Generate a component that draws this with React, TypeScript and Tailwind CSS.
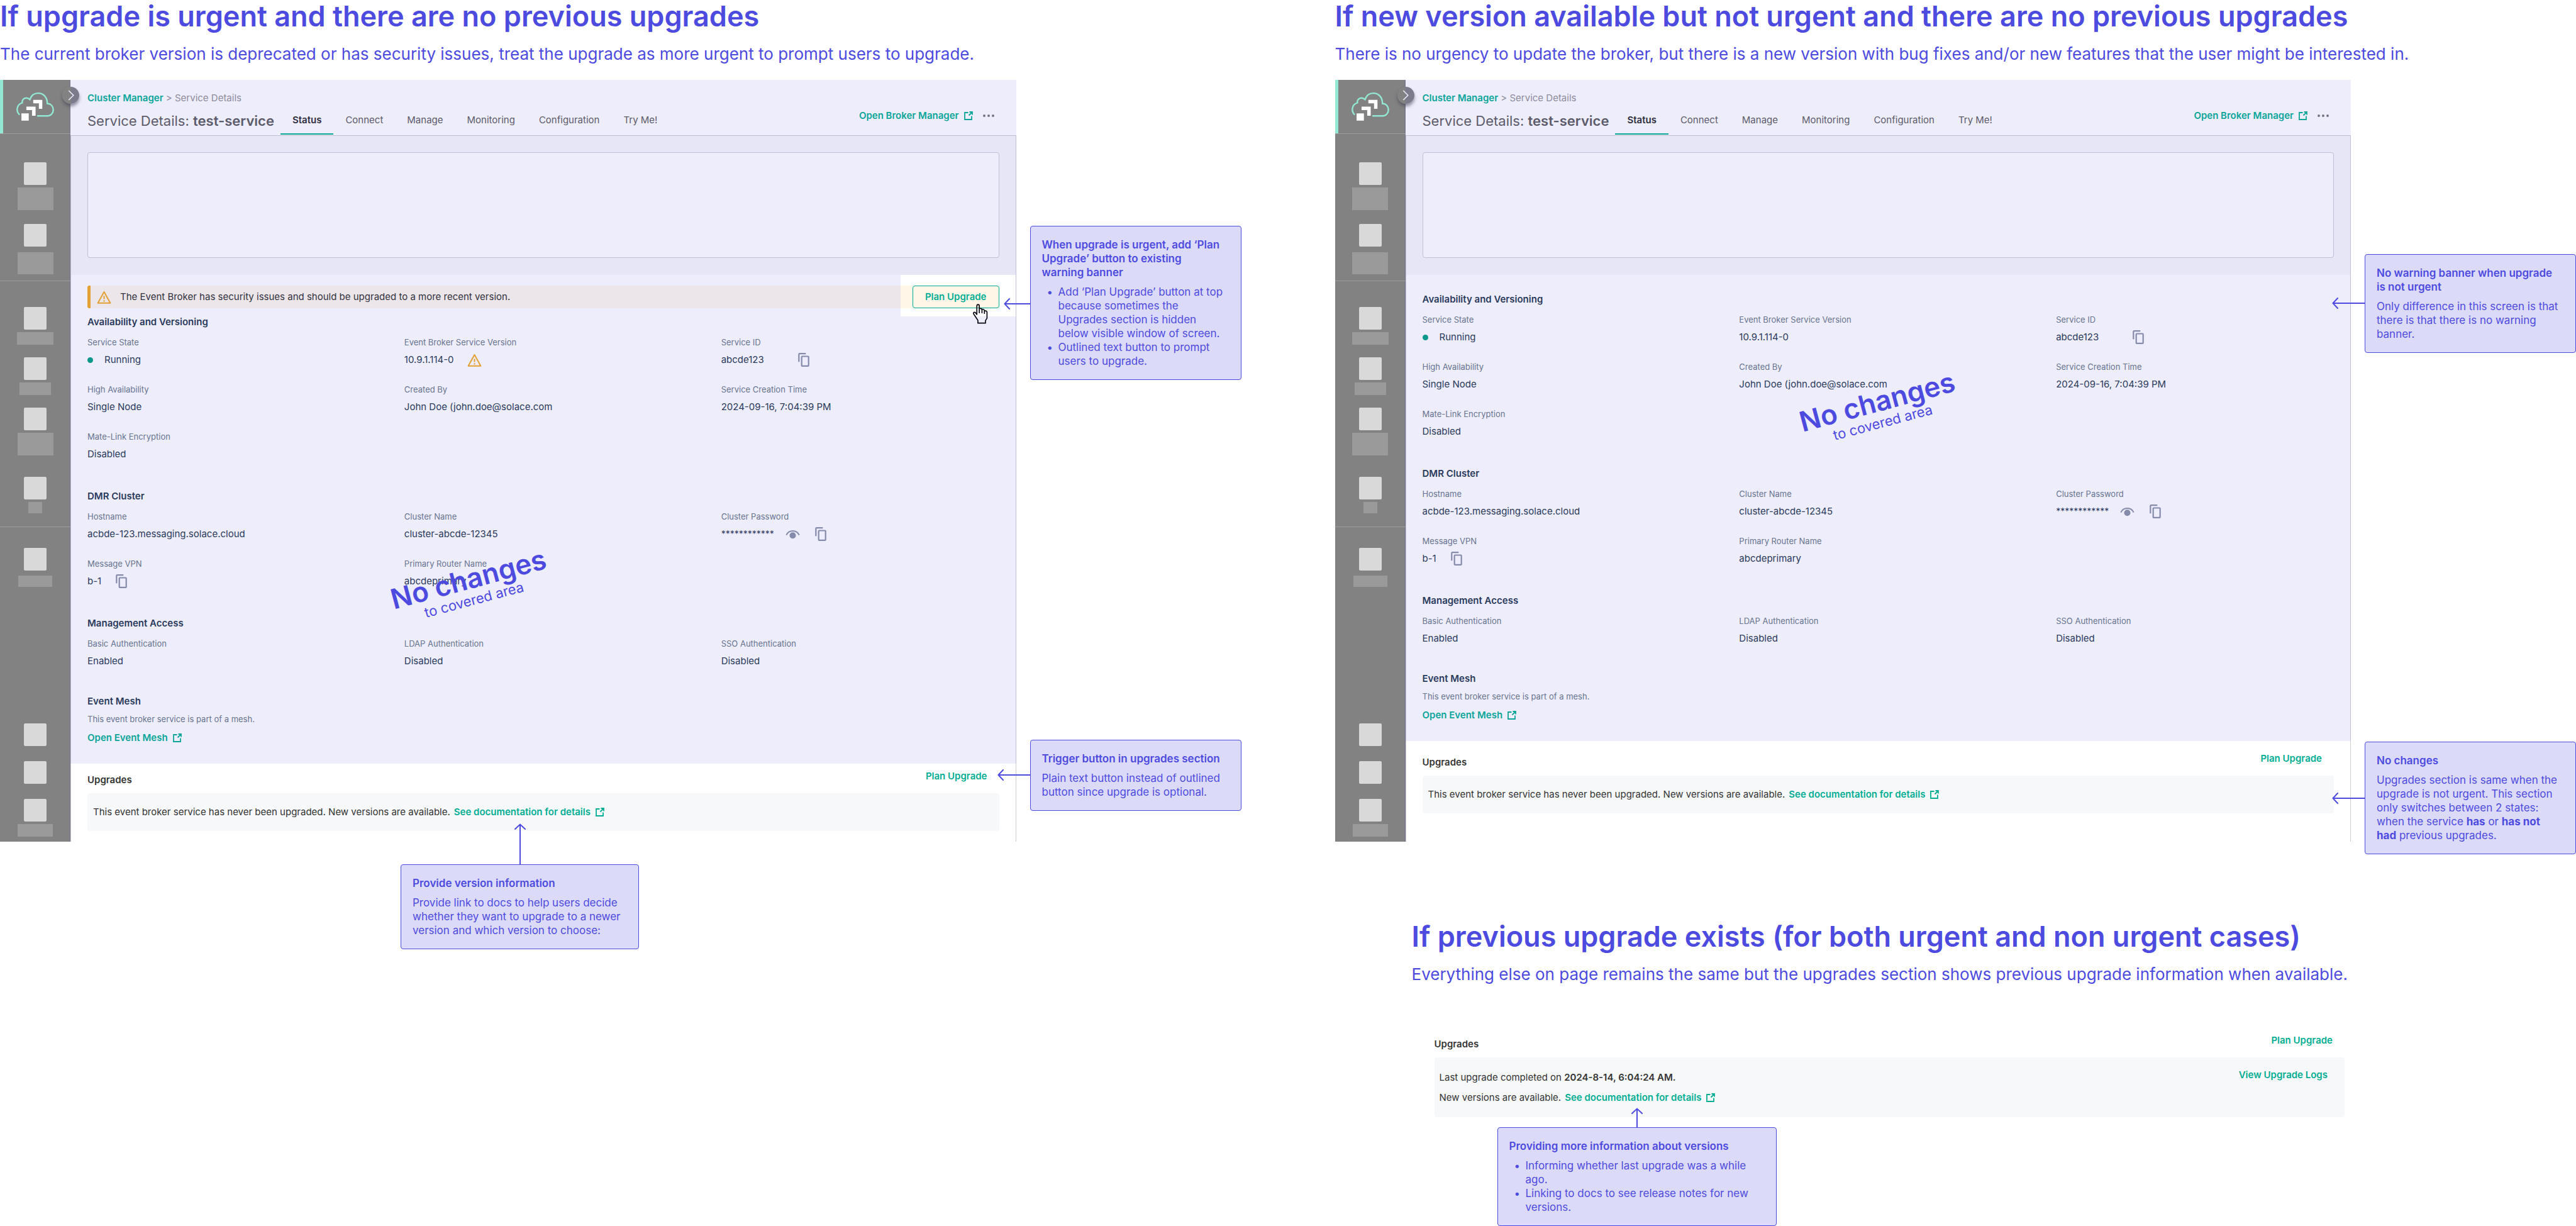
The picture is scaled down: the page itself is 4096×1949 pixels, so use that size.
import type { ReactNode } from "react";

function Logo() {
  return (
    <svg viewBox="140 120 320 260" className="h-[49px] w-[60px]" aria-hidden="true">
      <path
        d="M168 319C152 306 146 288 147 270C149 244 167 224 190 217C187 196 202 177 222 177C234 176 245 181 254 190C266 156 293 136 325 136C372 136 402 173 403 225C432 223 453 248 453 277C453 306 431 329 403 329H316"
        fill="none"
        stroke="#92e8d3"
        strokeWidth="13"
      />
      <path
        d="M183 307h62v62h-62zM225 250h78v77h-30v-48h-48zM283 192h77v77h-29v-47h-48z"
        fill="#ffffff"
      />
    </svg>
  );
}

function ExternalIcon() {
  return (
    <svg viewBox="0 0 14 14" className="h-[14px] w-[14px] shrink-0" fill="none" stroke="currentColor" strokeWidth="1.8" aria-hidden="true">
      <path d="M6.5 2H1v11h11V7.5M8.5 1H13v4.5M13 1L7.5 6.5" />
    </svg>
  );
}

function WarningIcon() {
  return (
    <svg viewBox="0 0 23 21" className="h-[21px] w-[23px] shrink-0" fill="none" stroke="#e3a035" strokeWidth="2" aria-hidden="true">
      <path d="M11.5 2L21.4 19.8H1.6z" strokeLinejoin="round" />
      <path d="M11.5 8.5v5M11.5 15.2v2.2" />
    </svg>
  );
}

function CopyButton() {
  return (
    <button type="button" aria-label="Copy" className="shrink-0">
      <svg viewBox="882 288 96 120" className="h-[22px] w-[18px]" fill="none" stroke="#858baa" strokeWidth="12" aria-hidden="true">
        <rect x="912" y="318" width="60" height="84" rx="5" />
        <path d="M948 294H894Q888 294 888 300V366" />
      </svg>
    </button>
  );
}

function EyeButton() {
  return (
    <button type="button" aria-label="Show password" className="shrink-0">
      <svg viewBox="628 308 124 80" className="h-[15px] w-[23px]" aria-hidden="true">
        <path d="M635 354C656 306 724 306 745 354" fill="none" stroke="#858baa" strokeWidth="11" />
        <circle cx="690" cy="357" r="27" fill="#858baa" />
      </svg>
    </button>
  );
}

function HandCursor() {
  return (
    <svg viewBox="655 300 140 180" className="absolute top-[45px] right-[43px] z-10 h-[34px] w-[26px]" aria-hidden="true">
      <path
        d="M703 469V445L667 391C660 378 676 370 684 382L694 395V323C694 306 715 306 715 323V380V350C719 338 738 342 738 356V380V354C744 346 759 350 759 364V386V368C766 359 781 364 781 376V427L768 447V469Z"
        fill="none"
        stroke="#05050f"
        strokeWidth="9"
        strokeLinejoin="round"
      />
    </svg>
  );
}

function ArrowLeft({ className }: { className: string }) {
  return (
    <div className={"absolute right-full flex items-center " + className}>
      <svg viewBox="0 0 10 18" className="h-[18px] w-[10px] shrink-0" fill="none" stroke="#4d4ae0" strokeWidth="2" strokeLinecap="round" aria-hidden="true">
        <path d="M9 1L1.500 9L9 17M1.500 9H10" />
      </svg>
      <div className="h-[2px] flex-1 bg-[#4d4ae0]" />
    </div>
  );
}

function ArrowUp({ className }: { className: string }) {
  return (
    <div className={"absolute bottom-full left-1/2 flex -translate-x-1/2 flex-col items-center " + className}>
      <svg viewBox="0 0 18 10" className="h-[10px] w-[18px] shrink-0" fill="none" stroke="#4d4ae0" strokeWidth="2" strokeLinecap="round" aria-hidden="true">
        <path d="M1 9L9 1.500L17 9M9 1.500V10" />
      </svg>
      <div className="w-[2px] flex-1 bg-[#4d4ae0]" />
    </div>
  );
}

function Note({ title, className = "", arrow, children }: { title: string; className?: string; arrow: ReactNode; children: ReactNode }) {
  return (
    <aside className={"relative rounded-[4px] border border-[#4d4ae0] bg-[#dbdaf8] p-[18px] text-[17px] leading-[22px] text-[#4d4ae0] " + className}>
      {arrow}
      <h3 className="mb-[9px] pr-1 font-semibold">{title}</h3>
      {children}
    </aside>
  );
}

function NoteList({ items }: { items: string[] }) {
  return (
    <ul>
      {items.map((item) => (
        <li key={item} className="flex">
          <span className="w-[26px] shrink-0 pl-2">•</span>
          <span>{item}</span>
        </li>
      ))}
    </ul>
  );
}

function Heading({ title, text }: { title: string; text: string }) {
  return (
    <header className="text-[#4d4ae0]">
      <h1 className="text-[45px] leading-[52px] font-semibold whitespace-nowrap">{title}</h1>
      <p className="mt-[17px] text-[26px] leading-[34px] whitespace-nowrap">{text}</p>
    </header>
  );
}

function Tile({ label, className = "" }: { label?: string; className?: string }) {
  return (
    <div className={"flex flex-col items-center gap-1 " + className}>
      <div className="h-9 w-9 rounded-[2px] bg-[#d9d9d9]" />
      {label && <div className={"bg-[#9a9a9a] " + label} />}
    </div>
  );
}

function Sidebar() {
  return (
    <nav aria-label="Main" className="relative flex w-[112px] shrink-0 flex-col bg-[#828282] shadow-[inset_-2px_0_0_#7c7b8b]">
      <div className="relative flex h-[86px] items-center justify-center border-b border-[#9d9d9d]">
        <div className="absolute inset-y-0 left-0 w-[5px] bg-[#92e8d3]" />
        <Logo />
      </div>
      <button
        type="button"
        aria-label="Expand menu"
        className="absolute top-[11px] -right-[14px] z-10 flex h-[27px] w-[27px] items-center justify-center rounded-full bg-linear-to-r from-[#828282] from-50% to-[#7c7b8b] to-50% shadow-[0_4px_5px_rgba(60,60,80,0.55)]"
      >
        <svg viewBox="0 0 10 18" className="h-[17px] w-[10px]" fill="none" stroke="#eeedfb" strokeWidth="1.6" aria-hidden="true">
          <path d="M1 1L9 9L1 17" />
        </svg>
      </button>
      <div className="flex flex-col gap-[22px] border-b border-[#9d9d9d] pt-[45px] pb-[10px]">
        <Tile label="h-9 w-[57px]" />
        <Tile label="mt-[5px] h-[35px] w-[57px]" />
      </div>
      <div className="flex flex-col gap-[20px] border-b border-[#9d9d9d] pt-[41px] pb-[21px]">
        <Tile label="h-5 w-[58px]" />
        <Tile label="h-5 w-[50px]" />
        <Tile label="h-9 w-[57px]" />
        <Tile label="h-[18px] w-[22px]" className="mt-[14px]" />
      </div>
      <Tile label="mt-1 h-[18px] w-[54px]" className="mt-[33px]" />
      <div className="mt-auto flex flex-col gap-[24px] pb-2">
        <Tile />
        <Tile />
        <Tile label="h-5 w-[56px]" />
      </div>
    </nav>
  );
}

const tabs = ["Connect", "Manage", "Monitoring", "Configuration", "Try Me!"];

function ServiceHeader() {
  return (
    <div className="flex h-[89px] justify-between border-b border-[#bfbed2] bg-[#eeedfb] pr-[35px] pl-[27px] text-[15px] leading-[20px]">
      <div className="pt-[19px]">
        <p className="text-[#8d8b9c]">
          <a href="#clusters" className="font-semibold text-[#0aa59a]">Cluster Manager</a>
          {" > Service Details"}
        </p>
        <div className="flex h-12 items-center">
          <h2 className="mt-1 text-[22px] leading-[24px] text-[#5c5b6b]">
            Service Details: <strong className="font-semibold">test-service</strong>
          </h2>
          <div className="ml-[10px] flex h-full text-[#5c5b6b]">
            <a href="#status" className="flex items-center border-b-2 border-[#0aa59a] px-[19px] pt-1 font-semibold text-[#2f2e41]">Status</a>
            {tabs.map((tab) => (
              <a key={tab} href={"#" + tab} className="flex items-center border-b-2 border-transparent px-[19px] pt-1">{tab}</a>
            ))}
          </div>
        </div>
      </div>
      <div className="flex items-center gap-4 self-start pt-[47px]">
        <a href="#manager" className="flex items-center gap-2 font-semibold text-[#0aa59a]">
          Open Broker Manager <ExternalIcon />
        </a>
        <button type="button" aria-label="More actions" className="flex gap-[3px]">
          <span className="h-1 w-1 rounded-full bg-[#757486]" />
          <span className="h-1 w-1 rounded-full bg-[#757486]" />
          <span className="h-1 w-1 rounded-full bg-[#757486]" />
        </button>
      </div>
    </div>
  );
}

function Field({ label, children }: { label: string; children: ReactNode }) {
  return (
    <div>
      <dt className="text-[13px] leading-[20px] text-[#66748f]">{label}</dt>
      <dd className="mt-[6px] flex h-6 items-center text-[15px] leading-[24px] text-[#2a3a5c]">{children}</dd>
    </div>
  );
}

function Section({ title, className = "", children }: { title: string; className?: string; children: ReactNode }) {
  return (
    <section className={className}>
      <h3 className="text-[15px] leading-[20px] font-semibold text-[#2a3a5c]">{title}</h3>
      {children}
    </section>
  );
}

function Fields({ children }: { children: ReactNode }) {
  return <dl className="mt-3 grid grid-cols-3 gap-x-[62px] gap-y-[25px]">{children}</dl>;
}

function Stamp({ className }: { className: string }) {
  return (
    <div className={"absolute -rotate-15 text-center whitespace-nowrap text-[#4d4ae0] " + className}>
      <p className="text-[44px] leading-[44px] font-semibold">No changes</p>
      <p className="text-[22px] leading-[24px]">to covered area</p>
    </div>
  );
}

function UpgradesHeader() {
  return (
    <div className="flex items-end justify-between text-[15px] leading-[20px]">
      <h3 className="mb-[11px] font-semibold text-[#333333]">Upgrades</h3>
      <button type="button" className="mb-[9px] h-9 px-[19px] font-semibold text-[#00ad93]">Plan Upgrade</button>
    </div>
  );
}

function DocsLink() {
  return (
    <a href="#docs" className="inline-flex items-center gap-2 font-semibold text-[#00ad93]">
      See documentation for details <ExternalIcon />
    </a>
  );
}

function ServiceWindow({ urgent }: { urgent: boolean }) {
  return (
    <div className="flex min-w-0 flex-1 self-start">
      <Sidebar />
      <div className="flex min-w-0 flex-1 flex-col">
        <ServiceHeader />
        <div className="border-x border-[#bfbed2] bg-[#e7e6f6] px-[26px] pt-[26px] pb-[27px]">
          <div className="h-[168px] rounded-[4px] border border-[#bfbed2] bg-[#eeedfb]" />
        </div>
        <div className={"relative border-x border-[#bfbed2] bg-[#eeedfb] px-[26px] pb-[29px] " + (urgent ? "pt-[17px]" : "pt-[29px]")}>
          {urgent && (
            <>
              <div className="absolute top-0 right-0 h-[66px] w-[183px] bg-white" />
              <HandCursor />
              <div className="relative mb-3 flex h-9 text-[15px] leading-[20px]">
                <div className="w-[5px] rounded-l-[3px] bg-[#e3a035]" />
                <div role="alert" className="flex flex-1 items-center gap-[14px] bg-[#ece5e9] pl-[10px] text-[#33323f]">
                  <WarningIcon />
                  The Event Broker has security issues and should be upgraded to a more recent version.
                </div>
                <div className="flex bg-[#fff6e8] pl-[19px]">
                  <button type="button" className="rounded-[4px] border border-[#00ad93] px-[19px] font-semibold text-[#00ad93]">Plan Upgrade</button>
                </div>
              </div>
            </>
          )}
          <Section title="Availability and Versioning">
            <Fields>
              <Field label="Service State">
                <span className="mr-[18px] h-[9px] w-[9px] rounded-full bg-[#0b978c]" />
                Running
              </Field>
              <Field label="Event Broker Service Version">
                <span className="mr-[21px]">10.9.1.114-0</span>
                {urgent && <WarningIcon />}
              </Field>
              <Field label="Service ID">
                <span className="mr-[54px]">abcde123</span>
                <CopyButton />
              </Field>
              <Field label="High Availability">Single Node</Field>
              <Field label="Created By">John Doe (john.doe@solace.com</Field>
              <Field label="Service Creation Time">2024-09-16, 7:04:39 PM</Field>
              <Field label="Mate-Link Encryption">Disabled</Field>
            </Fields>
          </Section>
          <Section title="DMR Cluster" className="mt-[45px]">
            <Fields>
              <Field label="Hostname">acbde-123.messaging.solace.cloud</Field>
              <Field label="Cluster Name">cluster-abcde-12345</Field>
              <Field label="Cluster Password">
                <span className="mr-[18px] text-[14px]">************</span>
                <EyeButton />
                <span className="w-6" />
                <CopyButton />
              </Field>
              <Field label="Message VPN">
                <span className="mr-[23px]">b-1</span>
                <CopyButton />
              </Field>
              <Field label="Primary Router Name">abcdeprimary</Field>
            </Fields>
          </Section>
          <Section title="Management Access" className="mt-[45px]">
            <Fields>
              <Field label="Basic Authentication">Enabled</Field>
              <Field label="LDAP Authentication">Disabled</Field>
              <Field label="SSO Authentication">Disabled</Field>
            </Fields>
          </Section>
          <Section title="Event Mesh" className="mt-[42px]">
            <p className="mt-2 text-[13px] leading-[20px] text-[#66748f]">This event broker service is part of a mesh.</p>
            <a href="#mesh" className="mt-2 inline-flex h-6 items-center gap-2 text-[15px] font-semibold text-[#0aa59a]">
              Open Event Mesh <ExternalIcon />
            </a>
          </Section>
          <Stamp className={urgent ? "top-[461px] left-[508px]" : "top-[179px] left-[625px]"} />
        </div>
        <div className={"border-x border-[#cccccc] bg-white px-[26px] " + (urgent ? "pt-[2px] pb-[17px]" : "pt-[10px] pb-[45px]")}>
          <UpgradesHeader />
          <p className="flex items-center gap-[6px] rounded-[4px] bg-[#f7f8fa] px-[9px] py-[14px] text-[15px] leading-[32px] text-[#333333]">
            This event broker service has never been upgraded. New versions are available. <DocsLink />
          </p>
        </div>
      </div>
    </div>
  );
}

export default function App() {
  return (
    <main className="grid min-h-screen grid-cols-2 gap-x-[149px] overflow-hidden bg-white font-[Inter,sans-serif]">
      <section className="min-w-0">
        <Heading
          title="If upgrade is urgent and there are no previous upgrades"
          text="The current broker version is deprecated or has security issues, treat the upgrade as more urgent to prompt users to upgrade."
        />
        <div className="mt-6 flex gap-[22px]">
          <ServiceWindow urgent />
          <div className="flex w-[336px] shrink-0 flex-col pt-[232px]">
            <Note
              title={"When upgrade is urgent, add ‘Plan Upgrade’ button to existing warning\u00a0banner"}
              arrow={<ArrowLeft className="top-[114px] w-[43px]" />}
            >
              <NoteList
                items={[
                  "Add ‘Plan Upgrade’ button at top because sometimes the Upgrades section is hidden below visible window of screen.",
                  "Outlined text button to prompt users to upgrade.",
                ]}
              />
            </Note>
            <Note
              title="Trigger button in upgrades section"
              className="mt-[572px]"
              arrow={<ArrowLeft className="top-[46px] w-[53px]" />}
            >
              <p>Plain text button instead of outlined button since upgrade is optional.</p>
            </Note>
          </div>
        </div>
        <Note
          title="Provide version information"
          className="mt-9 ml-[637px] w-[379px]"
          arrow={<ArrowUp className="h-[66px]" />}
        >
          <p>Provide link to docs to help users decide whether they want to upgrade to a newer version and which version to choose:</p>
        </Note>
      </section>

      <section className="min-w-0">
        <Heading
          title="If new version available but not urgent and there are no previous upgrades"
          text="There is no urgency to update the broker, but there is a new version with bug fixes and/or new features that the user might be interested in."
        />
        <div className="mt-6 flex gap-[22px]">
          <ServiceWindow urgent={false} />
          <div className="flex w-[336px] shrink-0 flex-col pt-[277px]">
            <Note
              title="No warning banner when upgrade is not urgent"
              arrow={<ArrowLeft className="top-[68px] w-[53px]" />}
            >
              <p>Only difference in this screen is that there is that there is no warning banner.</p>
            </Note>
            <Note
              title="No changes"
              className="mt-[618px]"
              arrow={<ArrowLeft className="top-[80px] w-[53px]" />}
            >
              <p>
                Upgrades section is same when the upgrade is not urgent. This section only switches between 2 states: when the service{" "}
                <strong className="font-bold">has</strong> or <strong className="font-bold">has not had</strong>
                {"\u00a0previous upgrades."}
              </p>
            </Note>
          </div>
        </div>
        <div className="mt-[105px] pl-[122px]">
          <Heading
            title="If previous upgrade exists (for both urgent and non urgent cases)"
            text="Everything else on page remains the same but the upgrades section shows previous upgrade information when available."
          />
          <div className="mt-[70px] mr-[368px] ml-[36px]">
            <UpgradesHeader />
            <div className="flex items-start justify-between rounded-[4px] bg-[#f7f8fa] px-2 pt-4 pb-[15px] text-[15px] leading-[32px] text-[#333333]">
              <div>
                <p>
                  Last upgrade completed on <strong className="font-semibold">2024-8-14, 6:04:24 AM.</strong>
                </p>
                <p className="flex items-center gap-[6px]">
                  New versions are available. <DocsLink />
                </p>
              </div>
              <button type="button" className="-mt-1 px-[19px] font-semibold text-[#00ad93]">View Upgrade Logs</button>
            </div>
          </div>
          <Note
            title="Providing more information about versions"
            className="mt-4 ml-[136px] w-[444px]"
            arrow={<ArrowUp className="h-8" />}
          >
            <NoteList
              items={[
                "Informing whether last upgrade was a while ago.",
                "Linking to docs to see release notes for new versions.",
              ]}
            />
          </Note>
        </div>
      </section>
    </main>
  );
}
